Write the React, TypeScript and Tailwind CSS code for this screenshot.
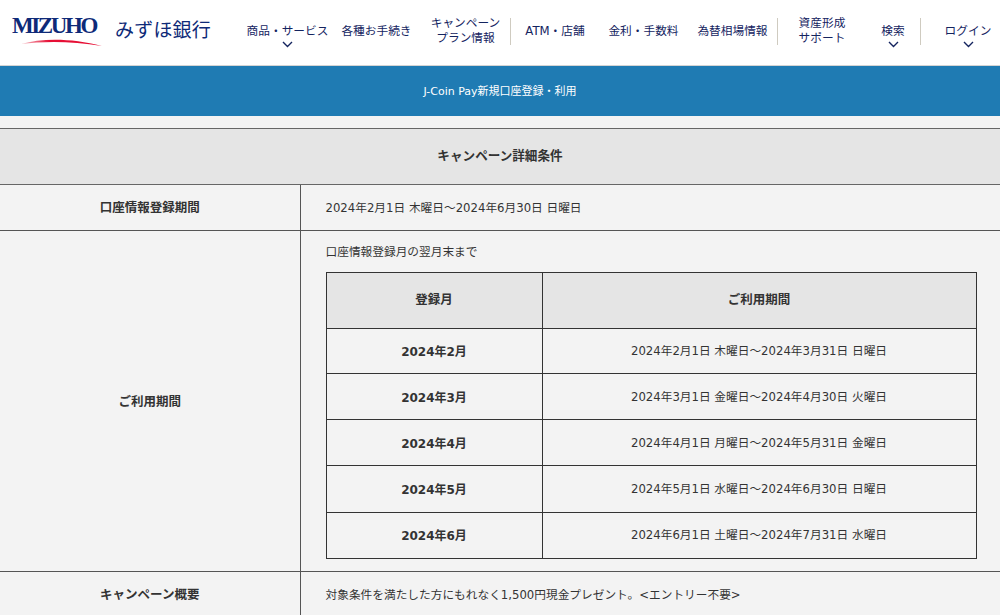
import React from "react";

const font = { fontFamily: '"DejaVu Sans", "Noto Sans CJK JP", sans-serif' };

function Chevron() {
  return (
    <svg width="11" height="7" viewBox="0 0 11 7" fill="none" className="block mx-auto mt-[2px]">
      <path d="M1 1l4.5 4.5L10 1" stroke="#14245f" strokeWidth="1.4" />
    </svg>
  );
}

function NavItem({ lines, chevron, width, extra = "" }: { lines: string[]; chevron?: boolean; width: string; extra?: string }) {
  return (
    <a className={`${width} ${extra} shrink-0 text-center text-[11.7px] leading-[15px] text-[#14245f] whitespace-nowrap`}>
      {lines.map((l) => (
        <div key={l}>{l}</div>
      ))}
      {chevron && <Chevron />}
    </a>
  );
}

const Divider = () => <div className="w-[1px] h-[27px] shrink-0 bg-[#cfcbc0] self-start mt-[18px]" />;

const rows = [
  ["2024年2月", "2024年2月1日 木曜日～2024年3月31日 日曜日", "h-[45px]", "pt-[2px]"],
  ["2024年3月", "2024年3月1日 金曜日～2024年4月30日 火曜日", "h-[46px]", "pt-[2px]"],
  ["2024年4月", "2024年4月1日 月曜日～2024年5月31日 金曜日", "h-[46px]", "pt-[2px]"],
  ["2024年5月", "2024年5月1日 水曜日～2024年6月30日 日曜日", "h-[47px]", "pt-[2px]"],
  ["2024年6月", "2024年6月1日 土曜日～2024年7月31日 水曜日", "h-[46px]", "pt-0"],
];

export default function App() {
  return (
    <div style={font} className="w-[1000px] h-[615px] overflow-hidden bg-[#f3f3f3] text-[#333]">
      <header className="h-[66px] bg-white border-b border-[#d4d4d4] flex overflow-hidden">
        <div className="w-[243px] shrink-0 flex items-start pl-[12px]">
          <div className="w-[92px] shrink-0 pt-[13px]">
            <div
              className="text-[#0e2a78] text-[23px] leading-[26px] font-bold tracking-[-2.4px] whitespace-nowrap"
              style={{ fontFamily: '"Liberation Serif", serif' }}
            >
              MIZUHO
            </div>
            <svg width="92" height="9" viewBox="0 0 92 9" className="block -mt-[1px]">
              <defs>
                <linearGradient id="sw" x1="0" x2="1" y1="0" y2="0">
                  <stop offset="0" stopColor="#f7c9cf" />
                  <stop offset="0.35" stopColor="#e60f35" />
                  <stop offset="1" stopColor="#e60f35" />
                </linearGradient>
              </defs>
              <path d="M9 6C30 0 60 0 90 8C60 3 32 3 9 6Z" fill="url(#sw)" />
            </svg>
          </div>
          <div className="ml-[11px] pt-[17px] text-[19px] leading-[26px] text-[#0e2a78] tracking-[0.2px] whitespace-nowrap">みずほ銀行</div>
        </div>
        <nav className="flex items-start flex-1">
          <NavItem width="w-[89px]" extra="pt-[24px]" lines={["商品・サービス"]} chevron />
          <NavItem width="w-[89px]" extra="pt-[24px]" lines={["各種お手続き"]} />
          <NavItem width="w-[89px]" extra="pt-[16px]" lines={["キャンペーン", "プラン情報"]} />
          <Divider />
          <NavItem width="w-[88px]" extra="pt-[24px]" lines={["ATM・店舗"]} />
          <NavItem width="w-[89px]" extra="pt-[24px]" lines={["金利・手数料"]} />
          <NavItem width="w-[89px]" extra="pt-[24px]" lines={["為替相場情報"]} />
          <Divider />
          <NavItem width="w-[88px]" extra="pt-[16px]" lines={["資産形成", "サポート"]} />
          <NavItem width="w-[54px]" extra="pt-[24px]" lines={["検索"]} chevron />
          <Divider />
          <NavItem width="w-[79px]" extra="pt-[24px] pl-[15px]" lines={["ログイン"]} chevron />
        </nav>
      </header>

      <div className="h-[50px] pt-[2px] bg-[#1f7bb3] flex items-center justify-center text-white text-[11px]">J-Coin Pay新規口座登録・利用</div>

      <table className="mt-[12px] w-[1000px] table-fixed border-collapse text-[11.7px]">
        <colgroup>
          <col className="w-[300px]" />
          <col />
        </colgroup>
        <tbody>
          <tr className="h-[56px]">
            <th colSpan={2} className="bg-[#e5e5e5] border-y border-[#666] text-[12.6px] font-bold text-center">キャンペーン詳細条件</th>
          </tr>
          <tr className="h-[46px]">
            <th className="pt-[2px] border-y border-r border-[#555] text-[12.5px] font-bold text-center">口座情報登録期間</th>
            <td className="pt-[2px] border-y border-[#555] pl-[25px]">2024年2月1日 木曜日～2024年6月30日 日曜日</td>
          </tr>
          <tr className="h-[341px]">
            <th className="pt-[2px] border-y border-r border-[#555] text-[12.5px] font-bold text-center">ご利用期間</th>
            <td className="border-y border-[#555] pl-[25px] pr-[23px] align-top">
              <p className="h-[41px] pt-[11px] leading-[20px]">口座情報登録月の翌月末まで</p>
              <table className="w-[651px] table-fixed border-collapse">
                <colgroup>
                  <col className="w-[216px]" />
                  <col />
                </colgroup>
                <tbody>
                  <tr className="h-[56px] bg-[#e5e5e5]">
                    <th className="border border-[#333] text-[12.5px] font-bold text-center">登録月</th>
                    <th className="border border-[#333] text-[12.5px] font-bold text-center">ご利用期間</th>
                  </tr>
                  {rows.map(([m, p, h, pt]) => (
                    <tr key={m} className={h}>
                      <th className={`${pt} border border-[#333] text-[12px] font-bold text-center`}>{m}</th>
                      <td className={`${pt} border border-[#333] text-center`}>{p}</td>
                    </tr>
                  ))}
                </tbody>
              </table>
            </td>
          </tr>
          <tr className="h-[46px]">
            <th className="pt-[2px] border-t border-r border-[#555] text-[12.5px] font-bold text-center">キャンペーン概要</th>
            <td className="pt-[2px] border-t border-[#555] pl-[25px]">対象条件を満たした方にもれなく1,500円現金プレゼント。&lt;エントリー不要&gt;</td>
          </tr>
        </tbody>
      </table>
    </div>
  );
}
